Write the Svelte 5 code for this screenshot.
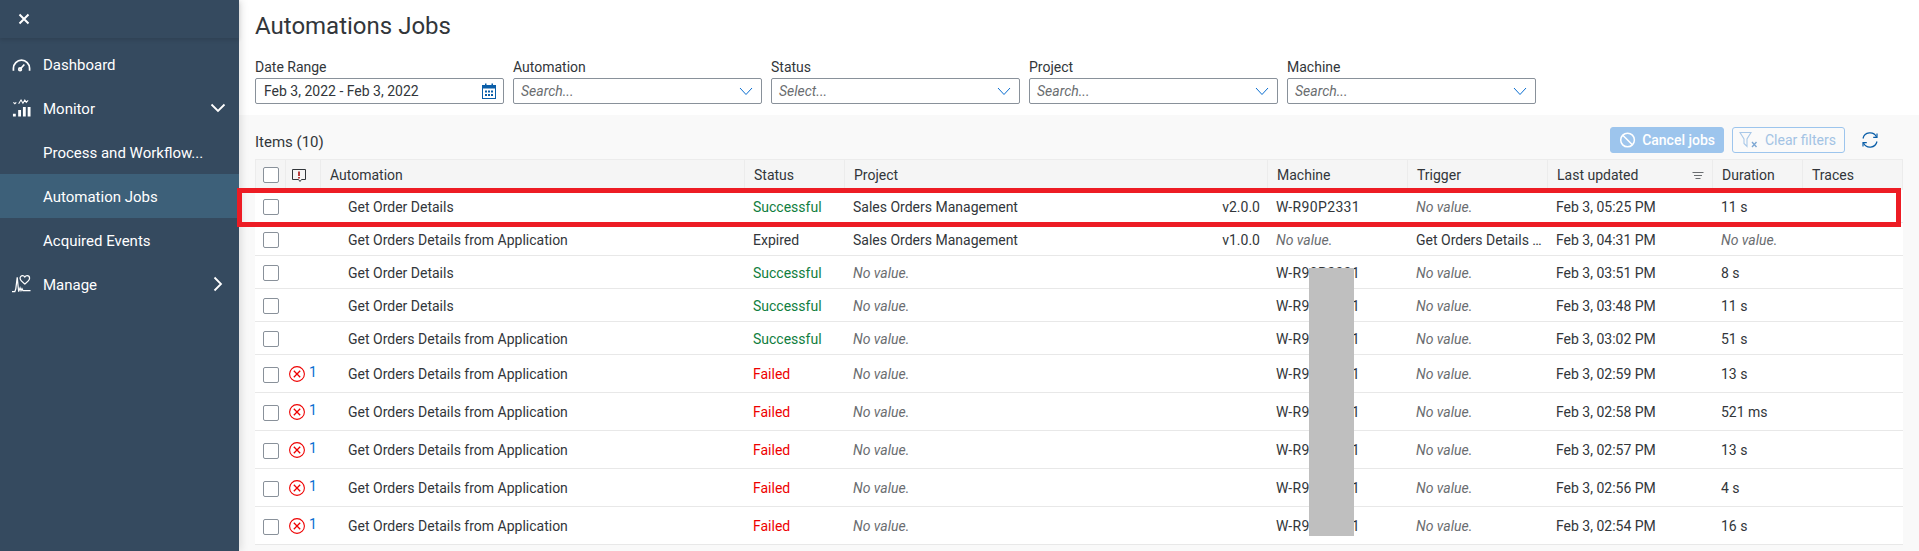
<script>
  const filters = [
    { label: "Automation", placeholder: "Search..." },
    { label: "Status", placeholder: "Select..." },
    { label: "Project", placeholder: "Search..." },
    { label: "Machine", placeholder: "Search..." },
  ];

  const columns = [
    { key: "automation", label: "Automation" },
    { key: "status", label: "Status" },
    { key: "project", label: "Project" },
    { key: "machine", label: "Machine" },
    { key: "trigger", label: "Trigger" },
    { key: "updated", label: "Last updated", sort: true },
    { key: "duration", label: "Duration" },
    { key: "traces", label: "Traces" },
  ];

  const ok = "Get Order Details";
  const app = "Get Orders Details from Application";
  const jobs = [
    { name: ok, status: "Successful", project: "Sales Orders Management", version: "v2.0.0", machine: "W-R90P2331", updated: "Feb 3, 05:25 PM", duration: "11 s" },
    { name: app, status: "Expired", project: "Sales Orders Management", version: "v1.0.0", trigger: app, updated: "Feb 3, 04:31 PM" },
    { name: ok, status: "Successful", machine: "W-R90P2331", updated: "Feb 3, 03:51 PM", duration: "8 s" },
    { name: ok, status: "Successful", machine: "W-R90P2331", updated: "Feb 3, 03:48 PM", duration: "11 s" },
    { name: app, status: "Successful", machine: "W-R90P2331", updated: "Feb 3, 03:02 PM", duration: "51 s" },
    { name: app, status: "Failed", errors: 1, machine: "W-R90P2331", updated: "Feb 3, 02:59 PM", duration: "13 s" },
    { name: app, status: "Failed", errors: 1, machine: "W-R90P2331", updated: "Feb 3, 02:58 PM", duration: "521 ms" },
    { name: app, status: "Failed", errors: 1, machine: "W-R90P2331", updated: "Feb 3, 02:57 PM", duration: "13 s" },
    { name: app, status: "Failed", errors: 1, machine: "W-R90P2331", updated: "Feb 3, 02:56 PM", duration: "4 s" },
    { name: app, status: "Failed", errors: 1, machine: "W-R90P2331", updated: "Feb 3, 02:54 PM", duration: "16 s" },
  ];
</script>

{#snippet empty()}
  <span class="empty">No value.</span>
{/snippet}

<div class="page">
  <nav class="sidebar">
    <div class="side-head">
      <svg width="14" height="14" viewBox="0 0 14 14"><path d="M2.5 2.5l9 9M11.5 2.5l-9 9" stroke="#fff" stroke-width="2" fill="none" /></svg>
    </div>
    <ul>
      <li>
        <svg class="nav-icon" viewBox="0 0 20 20" fill="none" stroke="#fff" stroke-width="1.8">
          <path d="M1.5 17v-2.5a8.5 8.5 0 0 1 17 0V17M8.5 15.5l4.5-5" />
          <circle cx="8.5" cy="15.5" r="1.4" />
        </svg>
        <span>Dashboard</span>
      </li>
      <li>
        <svg class="nav-icon" viewBox="0 0 20 20" fill="none" stroke="#fff">
          <path d="M1.5 4L3 5.500 4.500 4M7 5.500l2.500-4 2 3.500 2-3.500L15 4l2-2" stroke-width="1.1" />
          <path d="M1 16h3v3H1zM6.500 12h3v7h-3zM11.500 9h3v10h-3zM16.500 9h3v10h-3z" fill="#fff" stroke="none" />
        </svg>
        <span>Monitor</span>
        <svg class="nav-arrow" viewBox="0 0 16 16"><path d="M1.500 4.500L8 11l6.500-6.500" fill="none" stroke="#fff" stroke-width="1.8" /></svg>
      </li>
      <li><span>Process and Workflow...</span></li>
      <li class="active"><span>Automation Jobs</span></li>
      <li><span>Acquired Events</span></li>
      <li>
        <svg class="nav-icon" viewBox="0 0 20 20" fill="none" stroke="#fff">
          <path d="M0 18h3l1-3L5.500 3 7 18l1.500-4 1 3 1-2 1 2h8" stroke-width="1.3" />
          <path d="M13.500 10c-3-2.300-5-3.800-5-6 0-1.700 1.200-2.800 2.600-2.800 1 0 1.900.5 2.400 1.400.5-.9 1.400-1.400 2.400-1.400 1.400 0 2.600 1.100 2.600 2.800 0 2.200-2 3.700-5 6z" stroke-width="1.3" />
        </svg>
        <span>Manage</span>
        <svg class="nav-arrow" viewBox="0 0 16 16"><path d="M4.500 1.500L11 8l-6.500 6.500" fill="none" stroke="#fff" stroke-width="1.8" /></svg>
      </li>
    </ul>
  </nav>

  <main>
    <section class="top">
      <h1>Automations Jobs</h1>
      <div class="filters">
        <div class="filter">
          <label for="range">Date Range</label>
          <div class="input" id="range">
            <span>Feb 3, 2022 - Feb 3, 2022</span>
            <svg class="cal" width="14" height="16" viewBox="0 0 14 16">
              <rect x="0.5" y="2.5" width="13" height="13" fill="none" stroke="#0a5ea8" />
              <rect x="0" y="2" width="14" height="3.5" fill="#0a5ea8" />
              <rect x="3" y="0.5" width="1.5" height="3" fill="#0a5ea8" />
              <rect x="9.5" y="0.5" width="1.5" height="3" fill="#0a5ea8" />
              <path d="M3 7.500h2v2H3zM6 7.500h2v2H6zM9 7.500h2v2H9zM3 11h2v2H3zM6 11h2v2H6zM9 11h2v2H9z" fill="#0a5ea8" />
            </svg>
          </div>
        </div>
        {#each filters as f}
          <div class="filter">
            <label for={f.label}>{f.label}</label>
            <div class="input" id={f.label}>
              <span class="placeholder">{f.placeholder}</span>
              <svg width="14" height="14" viewBox="0 0 14 14"><path d="M1 4l6 6.500L13 4" fill="none" stroke="#0a6ed1" /></svg>
            </div>
          </div>
        {/each}
      </div>
    </section>

    <section class="content">
      <div class="toolbar">
        <span class="items">Items (10)</span>
        <div class="actions">
          <button class="cancel">
            <svg width="18" height="18" viewBox="0 0 18 18" fill="none" stroke="#fff" stroke-width="1.6">
              <circle cx="9" cy="9" r="7.2" />
              <path d="M4 4l10 10" />
            </svg>
            Cancel jobs
          </button>
          <button class="clear">
            <svg width="20" height="18" viewBox="0 0 20 18" fill="none" stroke="#a9c8e8" stroke-width="1.1">
              <path d="M1 1.500h11L8 8v7.500L5 12.500V8z" />
              <path d="M13 11l4.500 5M17.500 11L13 16" stroke="#7fa8d3" stroke-width="1.4" />
            </svg>
            Clear filters
          </button>
          <svg class="refresh" width="18" height="18" viewBox="0 0 18 18" fill="none" stroke="#0a5ea8" stroke-width="1.2">
            <path d="M2 7.500A7.200 7.200 0 0 1 15.500 6" />
            <path d="M16 2.500v3.800h-3.800" />
            <path d="M16 10.500A7.200 7.200 0 0 1 2.500 12" />
            <path d="M2 15.500v-3.800h3.800" />
          </svg>
        </div>
      </div>

      <table>
        <colgroup>
          <col style="width: 31px" />
          <col style="width: 35px" />
          <col style="width: 424px" />
          <col style="width: 100px" />
          <col style="width: 423px" />
          <col style="width: 140px" />
          <col style="width: 140px" />
          <col style="width: 165px" />
          <col style="width: 90px" />
          <col style="width: 100px" />
        </colgroup>
        <thead>
          <tr>
            <th class="check"><span class="box"></span></th>
            <th class="msg">
              <svg width="16" height="16" viewBox="0 0 16 16" fill="none" stroke="#32363a">
                <path d="M1.500 2.500h13v10h-4l-1.500 2-1.500-2h-6z" />
                <path d="M8 4.500v4.500M8 10v1.500" stroke="#a50000" stroke-width="1.5" />
              </svg>
            </th>
            {#each columns as c}
              <th>
                {c.label}
                {#if c.sort}
                  <svg class="sort" width="12" height="10" viewBox="0 0 12 10"><path d="M0.500 1.500h11M2 4.500h8M3.500 7.500h5" stroke="#6a6d70" /></svg>
                {/if}
              </th>
            {/each}
          </tr>
        </thead>
        <tbody>
          {#each jobs as job}
            <tr class:tall={job.errors}>
              <td class="check"><span class="box"></span></td>
              <td class="msg">
                {#if job.errors}
                  <div class="err">
                    <svg width="16" height="16" viewBox="0 0 16 16" fill="none" stroke="#e00">
                      <circle cx="8" cy="8" r="7.4" stroke-width="1.1" />
                      <path d="M4.800 4.800l6.400 6.400M11.200 4.800l-6.400 6.400" stroke-width="1.3" />
                    </svg>
                    <a href="#top">{job.errors}</a>
                  </div>
                {/if}
              </td>
              <td class="name">{job.name}</td>
              <td class={job.status.toLowerCase()}>{job.status}</td>
              <td>
                <div class="project">
                  {#if job.project}
                    <span>{job.project}</span>
                    <span>{job.version}</span>
                  {:else}
                    {@render empty()}
                  {/if}
                </div>
              </td>
              <td class="machine">{#if job.machine}{job.machine}{:else}{@render empty()}{/if}</td>
              <td>{#if job.trigger}{job.trigger}{:else}{@render empty()}{/if}</td>
              <td>{job.updated}</td>
              <td>{#if job.duration}{job.duration}{:else}{@render empty()}{/if}</td>
              <td></td>
            </tr>
          {/each}
        </tbody>
      </table>
    </section>
  </main>

  <!-- markup added on top of the screenshot -->
  <div class="highlight"></div>
  <div class="redact"></div>
</div>

<style>
  :global(body) {
    margin: 0;
    overflow: hidden;
  }
  .page {
    position: relative;
    display: flex;
    width: 1919px;
    height: 551px;
    overflow: hidden;
    font-family: Roboto, Arial, sans-serif;
    font-size: 14px;
    color: #32363a;
    background: #fff;
  }
  .sidebar {
    width: 239px;
    flex-shrink: 0;
    background: #354a5f;
    color: #fff;
    box-shadow: 2px 0 8px rgba(0, 0, 0, 0.12);
    z-index: 1;
  }
  .side-head {
    display: flex;
    align-items: center;
    height: 38px;
    padding-left: 17px;
    box-shadow: 0 2px 4px rgba(0, 0, 0, 0.12);
  }
  ul {
    list-style: none;
    margin: 4px 0 0;
    padding: 0;
  }
  li {
    display: flex;
    align-items: center;
    height: 44px;
    padding: 1px 0 0 43px;
    position: relative;
    font-size: 15px;
    box-sizing: border-box;
  }
  li.active {
    background: #3d6079;
  }
  .nav-icon {
    position: absolute;
    left: 12px;
    top: 12px;
    width: 19px;
    height: 20px;
  }
  .nav-arrow {
    position: absolute;
    left: 210px;
    top: 14px;
    width: 16px;
    height: 16px;
  }
  main {
    flex: 1;
    min-width: 0;
    display: flex;
    flex-direction: column;
  }
  .top {
    height: 115px;
    box-sizing: border-box;
    padding: 10px 16px 0;
  }
  h1 {
    margin: 0 0 17px;
    font-size: 24px;
    font-weight: 400;
    line-height: 32px;
  }
  .filters {
    display: flex;
    gap: 9px;
  }
  .filter {
    width: 249px;
  }
  label {
    display: block;
    font-size: 14px;
    line-height: 16px;
    margin-bottom: 3px;
    color: #32363a;
  }
  .input {
    display: flex;
    align-items: center;
    justify-content: space-between;
    height: 26px;
    box-sizing: border-box;
    padding: 0 8px;
    border: 1px solid #89919a;
    border-radius: 2px;
  }
  .input .cal {
    margin-right: -1px;
  }
  .placeholder {
    font-style: italic;
    color: #6a6d70;
    margin-left: -1px;
  }
  .content {
    flex: 1;
    background: #f9f9f9;
    padding: 0 16px;
  }
  .toolbar {
    display: flex;
    align-items: center;
    justify-content: space-between;
    height: 44px;
  }
  .items {
    font-size: 15px;
    margin-top: 9px;
  }
  .actions {
    display: flex;
    align-items: center;
    margin-top: 6px;
  }
  button {
    display: flex;
    align-items: center;
    gap: 6px;
    height: 26px;
    box-sizing: border-box;
    border-radius: 3px;
    font: inherit;
    padding: 0 8px;
    white-space: nowrap;
  }
  .cancel {
    width: 114px;
    background: #9dc5ed;
    border: 1px solid #9dc5ed;
    color: #fff;
    font-weight: 500;
    margin-right: 8px;
  }
  .clear {
    width: 113px;
    background: #fafafa;
    border: 1px solid #9dc5ed;
    color: #a3c3e4;
    padding: 0 6px;
  }
  .refresh {
    margin-left: 16px;
    margin-right: 24px;
  }
  table {
    width: 1648px;
    table-layout: fixed;
    border-collapse: separate;
    border-spacing: 0;
    background: #fff;
  }
  th {
    position: relative;
    height: 30px;
    padding: 0 0 0 9px;
    background: #f5f5f5;
    border-top: 1px solid #ececec;
    border-right: 1px solid #ececec;
    font-weight: 400;
    text-align: left;
  }
  th:first-child {
    border-left: 1px solid #ececec;
  }
  td {
    height: 33px;
    box-sizing: border-box;
    padding: 1px 2px 0 8px;
    border-bottom: 1px solid #e8e8e8;
    white-space: nowrap;
    overflow: hidden;
    text-overflow: ellipsis;
  }
  tr.tall td {
    height: 38px;
  }
  .check {
    padding: 0 0 0 8px;
    line-height: 0;
  }
  td.check {
    padding-top: 2px;
  }
  th.check {
    padding-left: 7px;
  }
  .msg {
    padding: 0 0 0 3px;
  }
  th.msg {
    padding-left: 5px;
    line-height: 0;
  }
  .box {
    display: inline-block;
    width: 16px;
    height: 16px;
    box-sizing: border-box;
    border: 1px solid #89919a;
    border-radius: 2px;
    background: #fff;
  }
  .err {
    display: flex;
    align-items: center;
    gap: 4px;
  }
  .err a {
    color: #0a6ed1;
    text-decoration: none;
    margin-top: -3px;
  }
  .name {
    padding-left: 27px;
  }
  .machine {
    letter-spacing: 0.35px;
  }
  .machine .empty {
    letter-spacing: 0;
  }
  .successful {
    color: #107e3e;
  }
  .failed {
    color: #e00;
  }
  .project {
    display: flex;
    justify-content: space-between;
    padding-right: 6px;
  }
  .empty {
    font-style: italic;
    color: #6a6d70;
  }
  .sort {
    position: absolute;
    right: 8px;
    top: 11px;
  }
  .highlight {
    position: absolute;
    left: 237px;
    top: 188px;
    width: 1664px;
    height: 39px;
    box-sizing: border-box;
    border: 5px solid #ed1c24;
    z-index: 2;
  }
  .redact {
    position: absolute;
    left: 1309px;
    top: 268px;
    width: 45px;
    height: 268px;
    background: #bfbfbf;
    z-index: 2;
  }
</style>
